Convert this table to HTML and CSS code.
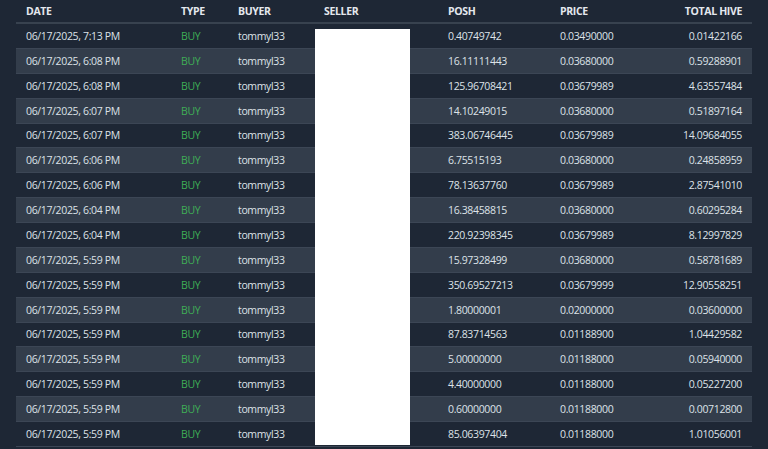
FILE: index.html
```html
<!DOCTYPE html>
<html>
<head>
<meta charset="utf-8">
<link rel="stylesheet" href="styles.css">
</head>
<body>
<div class="wrap">
<table class="trades">
<colgroup>
<col class="c-date"><col class="c-type"><col class="c-buyer"><col class="c-seller"><col class="c-posh"><col class="c-price"><col class="c-total">
</colgroup>
<thead>
<tr><th>Date</th><th>Type</th><th>Buyer</th><th>Seller</th><th>POSH</th><th>Price</th><th class="num">Total HIVE</th></tr>
</thead>
<tbody>
<tr><td>06/17/2025, 7:13 PM</td><td class="buy">BUY</td><td>tommyl33</td><td></td><td>0.40749742</td><td>0.03490000</td><td class="num">0.01422166</td></tr>
<tr><td>06/17/2025, 6:08 PM</td><td class="buy">BUY</td><td>tommyl33</td><td></td><td>16.11111443</td><td>0.03680000</td><td class="num">0.59288901</td></tr>
<tr><td>06/17/2025, 6:08 PM</td><td class="buy">BUY</td><td>tommyl33</td><td></td><td>125.96708421</td><td>0.03679989</td><td class="num">4.63557484</td></tr>
<tr><td>06/17/2025, 6:07 PM</td><td class="buy">BUY</td><td>tommyl33</td><td></td><td>14.10249015</td><td>0.03680000</td><td class="num">0.51897164</td></tr>
<tr><td>06/17/2025, 6:07 PM</td><td class="buy">BUY</td><td>tommyl33</td><td></td><td>383.06746445</td><td>0.03679989</td><td class="num">14.09684055</td></tr>
<tr><td>06/17/2025, 6:06 PM</td><td class="buy">BUY</td><td>tommyl33</td><td></td><td>6.75515193</td><td>0.03680000</td><td class="num">0.24858959</td></tr>
<tr><td>06/17/2025, 6:06 PM</td><td class="buy">BUY</td><td>tommyl33</td><td></td><td>78.13637760</td><td>0.03679989</td><td class="num">2.87541010</td></tr>
<tr><td>06/17/2025, 6:04 PM</td><td class="buy">BUY</td><td>tommyl33</td><td></td><td>16.38458815</td><td>0.03680000</td><td class="num">0.60295284</td></tr>
<tr><td>06/17/2025, 6:04 PM</td><td class="buy">BUY</td><td>tommyl33</td><td></td><td>220.92398345</td><td>0.03679989</td><td class="num">8.12997829</td></tr>
<tr><td>06/17/2025, 5:59 PM</td><td class="buy">BUY</td><td>tommyl33</td><td></td><td>15.97328499</td><td>0.03680000</td><td class="num">0.58781689</td></tr>
<tr><td>06/17/2025, 5:59 PM</td><td class="buy">BUY</td><td>tommyl33</td><td></td><td>350.69527213</td><td>0.03679999</td><td class="num">12.90558251</td></tr>
<tr><td>06/17/2025, 5:59 PM</td><td class="buy">BUY</td><td>tommyl33</td><td></td><td>1.80000001</td><td>0.02000000</td><td class="num">0.03600000</td></tr>
<tr><td>06/17/2025, 5:59 PM</td><td class="buy">BUY</td><td>tommyl33</td><td></td><td>87.83714563</td><td>0.01188900</td><td class="num">1.04429582</td></tr>
<tr><td>06/17/2025, 5:59 PM</td><td class="buy">BUY</td><td>tommyl33</td><td></td><td>5.00000000</td><td>0.01188000</td><td class="num">0.05940000</td></tr>
<tr><td>06/17/2025, 5:59 PM</td><td class="buy">BUY</td><td>tommyl33</td><td></td><td>4.40000000</td><td>0.01188000</td><td class="num">0.05227200</td></tr>
<tr><td>06/17/2025, 5:59 PM</td><td class="buy">BUY</td><td>tommyl33</td><td></td><td>0.60000000</td><td>0.01188000</td><td class="num">0.00712800</td></tr>
<tr><td>06/17/2025, 5:59 PM</td><td class="buy">BUY</td><td>tommyl33</td><td></td><td>85.06397404</td><td>0.01188000</td><td class="num">1.01056001</td></tr>
</tbody>
</table>
<div class="redact"></div>
</div>
</body>
</html>
```

FILE: styles.css
```css
html, body {
  margin: 0;
  padding: 0;
  background: #1e2735;
  overflow: hidden;
}
body {
  font-family: "Open Sans", "Noto Sans", sans-serif;
  color: #dde2e8;
  font-size: 10.5px;
  letter-spacing: -0.35px;
}
.wrap {
  position: relative;
  padding: 0 16px;
}
.trades {
  width: 736px;
  border-collapse: collapse;
  table-layout: fixed;
}
.c-date { width: 155px; }
.c-type { width: 57px; }
.c-buyer { width: 86px; }
.c-seller { width: 124px; }
.c-posh { width: 112px; }
.c-price { width: 100px; }
.c-total { width: 102px; }
.trades th {
  text-align: left;
  font-weight: 700;
  text-transform: uppercase;
  font-size: 10.5px;
  height: 22px;
  padding: 0 10px;
  vertical-align: middle;
  border-bottom: 2px solid #38424f;
  color: #e4e8ee;
}
.trades td {
  height: 23.875px;
  padding: 0 10px;
  border-bottom: 1px solid #3c4655;
  white-space: nowrap;
  vertical-align: middle;
}
.trades tbody tr:nth-child(even) td {
  background: #333d4b;
}
.trades .num {
  text-align: right;
}
.trades td.buy {
  color: #3fae56;
}
.redact {
  position: absolute;
  left: 315px;
  top: 29px;
  width: 95px;
  height: 416px;
  background: #ffffff;
}
```
